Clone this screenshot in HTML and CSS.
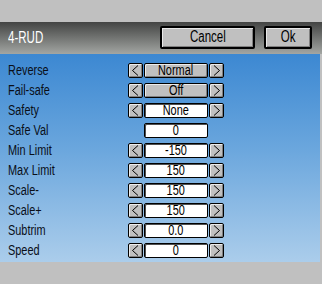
FILE: index.html
```html
<!DOCTYPE html>
<html>
<head>
<meta charset="utf-8">
<link rel="stylesheet" href="styles.css">
</head>
<body>
<div class="screen">
  <div class="topgap"></div>
  <div class="header">
    <div class="title"><span class="t">4-RUD</span></div>
    <div class="btn btn-cancel"><span class="t">Cancel</span></div>
    <div class="btn btn-ok"><span class="t">Ok</span></div>
  </div>
  <div class="panel">
    <div class="row"><div class="label"><span class="t">Reverse</span></div><div class="ctrl"><div class="arrow"><svg width="13" height="13" viewBox="0 0 13 13"><polyline points="9,1.5 3.5,6.5 9,11.5" class="chev"/></svg></div><div class="value grey"><span class="t">Normal</span></div><div class="arrow"><svg width="13" height="13" viewBox="0 0 13 13"><polyline points="4,1.5 9.5,6.5 4,11.5" class="chev"/></svg></div></div></div>
    <div class="row"><div class="label"><span class="t">Fail-safe</span></div><div class="ctrl"><div class="arrow"><svg width="13" height="13" viewBox="0 0 13 13"><polyline points="9,1.5 3.5,6.5 9,11.5" class="chev"/></svg></div><div class="value grey"><span class="t">Off</span></div><div class="arrow"><svg width="13" height="13" viewBox="0 0 13 13"><polyline points="4,1.5 9.5,6.5 4,11.5" class="chev"/></svg></div></div></div>
    <div class="row"><div class="label"><span class="t">Safety</span></div><div class="ctrl"><div class="arrow"><svg width="13" height="13" viewBox="0 0 13 13"><polyline points="9,1.5 3.5,6.5 9,11.5" class="chev"/></svg></div><div class="value"><span class="t">None</span></div><div class="arrow"><svg width="13" height="13" viewBox="0 0 13 13"><polyline points="4,1.5 9.5,6.5 4,11.5" class="chev"/></svg></div></div></div>
    <div class="row"><div class="label"><span class="t">Safe Val</span></div><div class="ctrl"><div class="spacer"></div><div class="value"><span class="t">0</span></div></div></div>
    <div class="row"><div class="label"><span class="t">Min Limit</span></div><div class="ctrl"><div class="arrow"><svg width="13" height="13" viewBox="0 0 13 13"><polyline points="9,1.5 3.5,6.5 9,11.5" class="chev"/></svg></div><div class="value"><span class="t">-150</span></div><div class="arrow"><svg width="13" height="13" viewBox="0 0 13 13"><polyline points="4,1.5 9.5,6.5 4,11.5" class="chev"/></svg></div></div></div>
    <div class="row"><div class="label"><span class="t">Max Limit</span></div><div class="ctrl"><div class="arrow"><svg width="13" height="13" viewBox="0 0 13 13"><polyline points="9,1.5 3.5,6.5 9,11.5" class="chev"/></svg></div><div class="value"><span class="t">150</span></div><div class="arrow"><svg width="13" height="13" viewBox="0 0 13 13"><polyline points="4,1.5 9.5,6.5 4,11.5" class="chev"/></svg></div></div></div>
    <div class="row"><div class="label"><span class="t">Scale-</span></div><div class="ctrl"><div class="arrow"><svg width="13" height="13" viewBox="0 0 13 13"><polyline points="9,1.5 3.5,6.5 9,11.5" class="chev"/></svg></div><div class="value"><span class="t">150</span></div><div class="arrow"><svg width="13" height="13" viewBox="0 0 13 13"><polyline points="4,1.5 9.5,6.5 4,11.5" class="chev"/></svg></div></div></div>
    <div class="row"><div class="label"><span class="t">Scale+</span></div><div class="ctrl"><div class="arrow"><svg width="13" height="13" viewBox="0 0 13 13"><polyline points="9,1.5 3.5,6.5 9,11.5" class="chev"/></svg></div><div class="value"><span class="t">150</span></div><div class="arrow"><svg width="13" height="13" viewBox="0 0 13 13"><polyline points="4,1.5 9.5,6.5 4,11.5" class="chev"/></svg></div></div></div>
    <div class="row"><div class="label"><span class="t">Subtrim</span></div><div class="ctrl"><div class="arrow"><svg width="13" height="13" viewBox="0 0 13 13"><polyline points="9,1.5 3.5,6.5 9,11.5" class="chev"/></svg></div><div class="value"><span class="t">0.0</span></div><div class="arrow"><svg width="13" height="13" viewBox="0 0 13 13"><polyline points="4,1.5 9.5,6.5 4,11.5" class="chev"/></svg></div></div></div>
    <div class="row"><div class="label"><span class="t">Speed</span></div><div class="ctrl"><div class="arrow"><svg width="13" height="13" viewBox="0 0 13 13"><polyline points="9,1.5 3.5,6.5 9,11.5" class="chev"/></svg></div><div class="value"><span class="t">0</span></div><div class="arrow"><svg width="13" height="13" viewBox="0 0 13 13"><polyline points="4,1.5 9.5,6.5 4,11.5" class="chev"/></svg></div></div></div>
  </div>
</div>
</body>
</html>
```
FILE: styles.css
```css
html, body {
  margin: 0;
  padding: 0;
  background: #c0c0c0;
}
.screen {
  width: 322px;
  height: 284px;
  background: #c0c0c0;
  font-family: "Liberation Sans", Arial, sans-serif;
  overflow: hidden;
}
.t {
  display: inline-block;
  transform: scaleX(0.78);
  transform-origin: center;
  white-space: nowrap;
}
.topgap {
  height: 22px;
}
.header {
  height: 32px;
  box-sizing: border-box;
  padding: 4px 10px 5px 8px;
  display: flex;
  align-items: center;
  background: linear-gradient(to bottom, #434443 0%, #6e706e 45%, #a3a6a3 100%);
}
.title {
  flex: 1;
  color: #ffffff;
  font-size: 16px;
  line-height: 23px;
}
.title .t {
  transform: scaleX(0.72);
  transform-origin: left center;
}
.btn {
  height: 23px;
  box-sizing: border-box;
  border: 2px solid #000;
  border-radius: 2px;
  background: #c0c0c0;
  box-shadow: inset 1px 1px 0 #e8e8e8, inset -1px -1px 0 #808080;
  color: #000;
  font-size: 16px;
  line-height: 18px;
  text-align: center;
}
.btn .t {
  transform: scaleX(0.72);
}
.btn-cancel {
  width: 95px;
}
.btn-ok {
  width: 48px;
  margin-left: 9px;
}
.panel {
  width: 320px;
  height: 208px;
  box-sizing: border-box;
  padding-top: 9px;
  background: linear-gradient(to bottom, #3c88d2 0%, #6aa6dd 45%, #abcdeb 100%);
}
.row {
  height: 20px;
  display: flex;
  align-items: flex-start;
}
.label {
  width: 128px;
  box-sizing: border-box;
  padding-left: 8px;
  font-size: 14px;
  line-height: 14px;
  color: #0a0f18;
}
.label .t {
  transform-origin: left center;
}
.ctrl {
  display: flex;
  align-items: center;
}
.arrow {
  width: 15px;
  height: 15px;
  box-sizing: border-box;
  border: 1px solid #000;
  border-radius: 2px;
  background: #c0c0c0;
  box-shadow: inset 1px 1px 0 #ececec, inset -1px -1px 0 #808080;
  display: flex;
  align-items: center;
  justify-content: center;
}
.arrow svg {
  display: block;
}
.chev {
  fill: none;
  stroke: #000;
  stroke-width: 1;
}
.spacer {
  width: 15px;
}
.value {
  width: 64px;
  height: 15px;
  margin: 0 1px;
  box-sizing: border-box;
  border: 1px solid #000;
  border-radius: 2px;
  background: #ffffff;
  box-shadow: inset 1px 1px 0 #505050;
  font-size: 14px;
  line-height: 12px;
  text-align: center;
  color: #000;
}
.value.grey {
  background: #c0c0c0;
  box-shadow: inset 1px 1px 0 #ececec, inset -1px -1px 0 #808080;
}
```
